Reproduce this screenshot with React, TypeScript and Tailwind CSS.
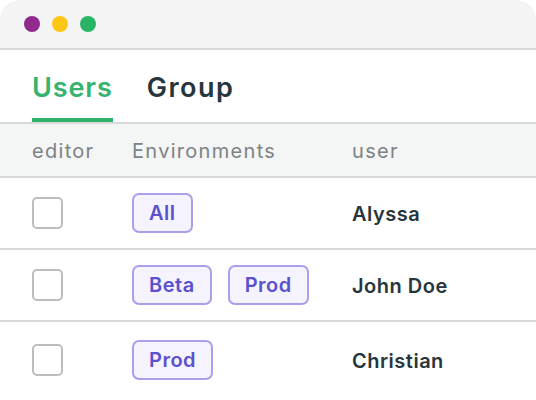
import React from 'react';

type Row = { envs: string[]; name: string };

const rows: Row[] = [
  { envs: ['All'], name: 'Alyssa' },
  { envs: ['Beta', 'Prod'], name: 'John Doe' },
  { envs: ['Prod'], name: 'Christian' },
];

function Badge({ label }: { label: string }) {
  return (
    <span className="flex h-[40px] items-center rounded-[7px] border-2 border-[#aa9fea] bg-[#f4f3fe] px-[15px] text-[20px] font-semibold tracking-[0.5px] text-[#5b50cf]">
      {label}
    </span>
  );
}

export default function App() {
  return (
    <div className="h-[400px] w-[536px] overflow-hidden bg-white" style={{ fontFamily: 'Inter, "Noto Sans", sans-serif' }}>
      <div className="h-full overflow-hidden rounded-t-[20px] bg-white">
        <div className="flex h-[48px] items-center gap-[12px] bg-[#f4f4f4] pl-[24px]">
          <span className="h-[16px] w-[16px] rounded-full bg-[#8f2b8c]" />
          <span className="h-[16px] w-[16px] rounded-full bg-[#fdc516]" />
          <span className="h-[16px] w-[16px] rounded-full bg-[#28b565]" />
        </div>
        <div className="h-[2px] bg-[#d8d9d9]" />

        <div className="flex h-[72px] items-end gap-[34px] pl-[32px]">
          <div className="flex h-full flex-col justify-end">
            <span className="pb-[17px] text-[27px] font-semibold leading-none tracking-[0.9px] text-[#36b36e]">Users</span>
            <span className="h-[4px] bg-[#2fb26a]" />
          </div>
          <div className="flex h-full flex-col justify-end">
            <span className="pb-[21px] text-[27px] font-semibold leading-none tracking-[1.5px] text-[#27363c]">Group</span>
          </div>
        </div>
        <div className="h-[2px] bg-[#d8d9d9]" />

        <div className="grid h-[52px] grid-cols-[100px_220px_1fr] items-center bg-[#f4f5f5] pl-[32px] pt-[2px] text-[20px] tracking-[1.3px] text-[#7c8385]">
          <span>editor</span>
          <span>Environments</span>
          <span>user</span>
        </div>
        <div className="h-[2px] bg-[#d8d9d9]" />

        {rows.map((row, i) => (
          <div key={row.name}>
            <div
              className={`grid grid-cols-[100px_220px_1fr] items-center pl-[32px] ${
                i === rows.length - 1 ? 'h-[76px]' : 'h-[70px]'
              }`}
            >
              <span className="h-[32px] w-[31px] rounded-[5px] border-2 border-[#bcbebe] bg-white" />
              <div className="flex gap-[16px]">
                {row.envs.map((e) => (
                  <Badge key={e} label={e} />
                ))}
              </div>
              <span className="pt-[2px] text-[20px] font-semibold tracking-[0.5px] text-[#27363c]">{row.name}</span>
            </div>
            {i < rows.length - 1 && <div className="h-[2px] bg-[#d8d9d9]" />}
          </div>
        ))}
      </div>
    </div>
  );
}
